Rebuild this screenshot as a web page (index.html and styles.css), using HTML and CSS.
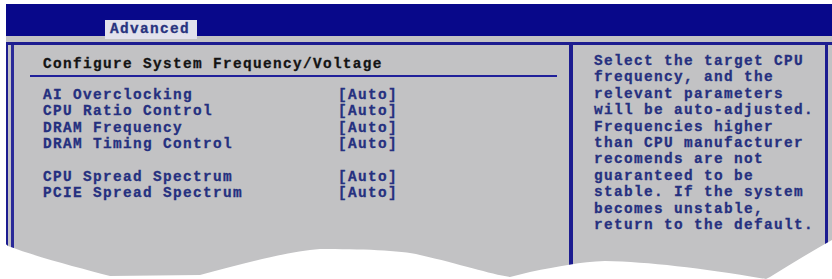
FILE: index.html
```html
<!DOCTYPE html>
<html lang="en">
<head>
    <meta charset="UTF-8">
    <title>BIOS Advanced</title>
    <link rel="stylesheet" href="styles.css">
</head>
<body>
    <div class="screen">
        <!-- top menu bar -->
        <div class="topbar">
            <span class="tab">Advanced</span>
        </div>

        <div class="frame">
            <div class="inner">
                <div class="main">
                    <div class="heading">Configure System Frequency/Voltage</div>
                    <div class="items">
                        <span>AI Overclocking</span><span>[Auto]</span>
                        <span>CPU Ratio Control</span><span>[Auto]</span>
                        <span>DRAM Frequency</span><span>[Auto]</span>
                        <span>DRAM Timing Control</span><span>[Auto]</span>
                        <span class="blank"></span><span class="blank"></span>
                        <span>CPU Spread Spectrum</span><span>[Auto]</span>
                        <span>PCIE Spread Spectrum</span><span>[Auto]</span>
                    </div>
                </div>
                <div class="help">Select the target CPU
frequency, and the
relevant parameters
will be auto-adjusted.
Frequencies higher
than CPU manufacturer
recomends are not
guaranteed to be
stable. If the system
becomes unstable,
return to the default.</div>
            </div>
        </div>

        <!-- torn paper edge -->
        <svg class="tear" viewBox="0 239 832 40" width="832" height="40">
            <path d="M0,239 L8,246 C40,258 80,268 110,276 L200,275 C250,262 290,251 320,249 C360,249 400,250 420,255 C460,264 490,274 510,277 L530,272 C560,266 580,262 605,261 C650,262 700,268 766,279 L770,277 C790,265 810,252 832,240 L832,279 L0,279 Z" fill="#fff"/>
        </svg>
    </div>
</body>
</html>
```

FILE: styles.css
```css
/* page */
html, body {
    margin: 0;
    background: #fff;
    overflow: hidden;
}

.screen {
    position: relative;
    width: 832px;
    height: 279px;
    padding: 4px 0 0 6px;
    box-sizing: border-box;
    font-family: "Liberation Mono", "Courier New", monospace;
    font-weight: bold;
    font-size: 14.4px;
    letter-spacing: 1.36px;
    -webkit-text-stroke: 0.3px currentColor;
    overflow: hidden;
}

/* blue menu bar */
.topbar {
    height: 32px;
    background: #08088a;
    display: flex;
    align-items: flex-end;
    padding-left: 99px;
}

.tab {
    background: #e2e2ec;
    color: #28337e;
    height: 19px;
    line-height: 19px;
    padding: 0 7px 0 5px;
    margin-bottom: -3px;
}

/* double frame */
.frame {
    background: #c2c2c4;
    padding-top: 6px;
    height: 243px;
    box-sizing: border-box;
}

.inner {
    display: grid;
    grid-template-columns: 561px 259px;
    border-top: 3px solid #1c1c90;
    border-left: 2px solid #1c1c90;
    height: 100%;
    box-sizing: border-box;
}

.main {
    padding: 11px 12px 0 0;
    margin-left: 3px;
    border-left: 3px solid #2a2a98;
}

.heading {
    color: #141414;
    line-height: 17px;
    padding: 0 0 2px 13px;
    margin-left: 16px;
    border-bottom: 2px solid #20209a;
}

.items {
    display: grid;
    grid-template-columns: 295px auto;
    margin: 10px 0 0 29px;
    color: #25307f;
    line-height: 16.4px;
}

.blank {
    height: 16.4px;
}

.help {
    border-left: 4px solid #1c1c90;
    border-right: 3px solid #1c1c90;
    padding: 8px 0 0 21px;
    color: #25307f;
    line-height: 16.4px;
    white-space: pre;
}

/* ragged bottom edge of the scan */
.tear {
    position: absolute;
    left: 0;
    bottom: 0;
    display: block;
}
```
